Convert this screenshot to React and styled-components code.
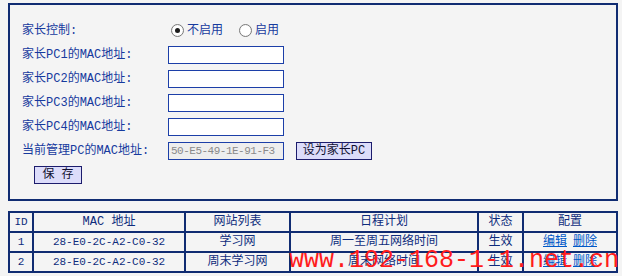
import React from 'react'
import styled, { createGlobalStyle } from 'styled-components'

const GlobalStyle = createGlobalStyle`
    body {
        margin: 0;
        background: #f4f4f4;
        font-family: "Liberation Mono", "Noto Sans CJK SC", monospace;
        font-size: 12px;
        line-height: 14px;
    }
`

const Page = styled.div`
    position: relative;
    width: 622px;
    height: 276px;
    padding: 3px 0 0 8px;
    box-sizing: border-box;
`

const Panel = styled.div`
    width: 610px;
    box-sizing: border-box;
    border: 2px solid #102c72;
    padding: 14px 0 12px 12px;
`

const Row = styled.div`
    display: grid;
    grid-template-columns: 146px 1fr;
    align-items: center;
    height: 24px;
    color: #163a9e;
`

const Field = styled.div`
    display: flex;
    align-items: center;
    gap: ${props => props.$gap || 0}px;
`

const TextInput = styled.input`
    width: 116px;
    height: 18px;
    box-sizing: border-box;
    margin: 0;
    padding: 0 2px;
    border: 1px solid #1c3fa8;
    background: ${props => props.readOnly ? '#eeeeee' : '#ffffff'};
    color: #8a8a8a;
    font-family: "Liberation Mono", monospace;
    font-size: 11px;
    letter-spacing: -0.5px;
    outline: none;
`

const RadioLabel = styled.label`
    display: flex;
    align-items: center;
    gap: 3px;
    margin-left: ${props => props.$offset}px;
    color: #163a9e;
`

const Radio = styled.input`
    appearance: none;
    width: 13px;
    height: 13px;
    margin: 0;
    border-radius: 50%;
    border: 1px solid #7a7a7a;
    background: radial-gradient(circle, #ffffff 55%, #e2e2e2 100%);
    position: relative;
    top: -1px;

    &:checked::after {
        content: '';
        position: absolute;
        left: 3px;
        top: 3px;
        width: 5px;
        height: 5px;
        border-radius: 50%;
        background: #1c1c1c;
    }
`

const Button = styled.button`
    height: 18px;
    width: ${props => props.$width}px;
    margin: 0 0 0 ${props => props.$left || 0}px;
    padding: 0;
    box-sizing: border-box;
    border: 1px solid #1c1c6c;
    background: #dcdcfa;
    color: #101030;
    font-family: "Liberation Mono", "Noto Sans CJK SC", monospace;
    font-size: 12px;
    line-height: 16px;
    white-space: pre;
`

const Table = styled.table`
    margin-top: 10px;
    width: 610px;
    border-collapse: collapse;
    table-layout: fixed;
    color: #0e2c7c;
`

const Cell = styled.td`
    border: 2px solid #102c72;
    height: 18px;
    padding: 0;
    text-align: center;
    white-space: nowrap;
    font-weight: 400;
    font-size: ${props => props.$small ? 11 : 12}px;
`

const Link = styled.a`
    color: #0058c8;
    text-decoration: underline;
    margin: 0 3px;
`

const Watermark = styled.div`
    position: absolute;
    left: 289px;
    top: 248px;
    color: #ff1c1c;
    font-family: "Liberation Mono", monospace;
    font-size: 25px;
    line-height: 25px;
    white-space: nowrap;
    pointer-events: none;
`

const macs = ['PC1', 'PC2', 'PC3', 'PC4']

const rules = [
    { id: 1, mac: '28-E0-2C-A2-C0-32', site: '学习网', plan: '周一至周五网络时间', state: '生效' },
    { id: 2, mac: '28-E0-2C-A2-C0-32', site: '周末学习网', plan: '周末网络时间', state: '生效' },
]

const App = () => {
    return (
        <Page>
            <GlobalStyle />
            <Panel>
                <Row>
                    <span>家长控制:</span>
                    <Field>
                        <RadioLabel $offset={3}>
                            <Radio type="radio" name="ctl" defaultChecked />
                            不启用
                        </RadioLabel>
                        <RadioLabel $offset={16}>
                            <Radio type="radio" name="ctl" />
                            启用
                        </RadioLabel>
                    </Field>
                </Row>
                {macs.map(pc => (
                    <Row key={pc}>
                        <span>家长{pc}的MAC地址:</span>
                        <Field><TextInput type="text" /></Field>
                    </Row>
                ))}
                <Row>
                    <span>当前管理PC的MAC地址:</span>
                    <Field $gap={12}>
                        <TextInput type="text" readOnly value="50-E5-49-1E-91-F3" />
                        <Button $width={76}>设为家长PC</Button>
                    </Field>
                </Row>
                <Row>
                    <Field><Button $width={48} $left={12}>保 存</Button></Field>
                </Row>
            </Panel>
            <Table>
                <colgroup>
                    <col style={{ width: 24 }} />
                    <col style={{ width: 152 }} />
                    <col style={{ width: 105 }} />
                    <col style={{ width: 188 }} />
                    <col style={{ width: 45 }} />
                    <col style={{ width: 94 }} />
                </colgroup>
                <thead>
                    <tr>
                        <Cell as="th" $small>ID</Cell>
                        <Cell as="th">MAC 地址</Cell>
                        <Cell as="th">网站列表</Cell>
                        <Cell as="th">日程计划</Cell>
                        <Cell as="th">状态</Cell>
                        <Cell as="th">配置</Cell>
                    </tr>
                </thead>
                <tbody>
                    {rules.map(r => (
                        <tr key={r.id}>
                            <Cell $small>{r.id}</Cell>
                            <Cell $small>{r.mac}</Cell>
                            <Cell>{r.site}</Cell>
                            <Cell>{r.plan}</Cell>
                            <Cell>{r.state}</Cell>
                            <Cell><Link href="#">编辑</Link><Link href="#">删除</Link></Cell>
                        </tr>
                    ))}
                </tbody>
            </Table>
            <Watermark>www.192-168-1-1.net.cn</Watermark>
        </Page>
    )
}

export default App
